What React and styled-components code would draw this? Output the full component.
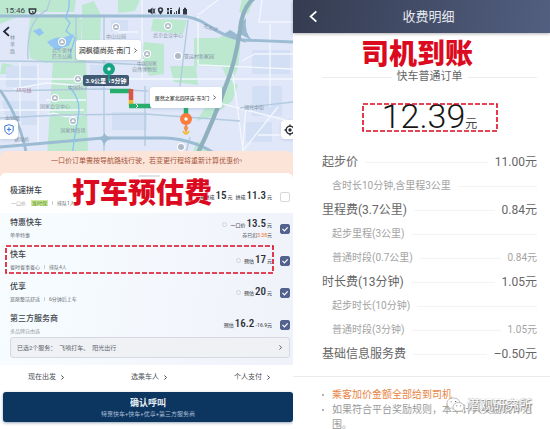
import React from "react";
import styled, { createGlobalStyle, css } from "styled-components";

const GlobalStyle = createGlobalStyle`
  * { box-sizing: border-box; }
  body {
    margin: 0;
    background: #fff;
    font-family: Roboto, "Noto Sans CJK SC", sans-serif;
    color: #333;
  }
  button, input { font: inherit; color: inherit; margin: 0; }
  button { border: 0; padding: 0; background: none; cursor: pointer; }
  h1, h2, h3, p, ul, dl, dd { margin: 0; padding: 0; font-weight: 400; }
`;

const red = "#dc0a20";

const Page = styled.div`
  display: grid;
  grid-template-columns: 293fr 257fr;
  min-height: 100vh;
  overflow: hidden;
`;

const Annotation = styled.strong`
  font: 900 28px/32px "Noto Sans CJK SC", sans-serif;
  color: ${red};
  white-space: nowrap;
`;

const Outline = styled.svg`
  position: absolute;
  inset: 0;
  width: 100%;
  height: 100%;
  overflow: visible;
  pointer-events: none;
`;

function DashedOutline() {
  return (
    <Outline aria-hidden="true">
      <rect width="100%" height="100%" fill="none" stroke={red} strokeWidth="1.6" strokeDasharray="5 2" />
    </Outline>
  );
}

/* ---------- Ride request ---------- */

const RidePanel = styled.main`
  display: flex;
  flex-direction: column;
  min-width: 0;
  background: #fff;
`;

const MapArea = styled.section`
  position: relative;
  height: 157px;
  overflow: hidden;
  background: #dde7f7;
`;

const MapCanvas = styled.svg`
  display: block;
  width: 100%;
  height: 100%;
  font-family: "Noto Sans CJK SC", sans-serif;
`;

const MapItem = styled.div`
  position: absolute;
  left: ${(p) => p.$x}px;
  top: ${(p) => p.$y}px;
`;

const Callout = styled.button`
  display: flex;
  align-items: center;
  justify-content: center;
  gap: 3px;
  width: ${(p) => p.$width}px;
  height: ${(p) => p.$height}px;
  border-radius: 3px;
  background: #fff;
  box-shadow: 0 1px 3px #5b75993d;
  color: #444;
  font-size: ${(p) => p.$size}px;
  font-weight: 500;
  white-space: nowrap;
`;

const TripTag = styled.div`
  width: 46px;
  border-radius: 2px;
  background: #405a73;
  color: #fff;
  font-size: 6px;
  font-weight: 700;
  line-height: 11px;
  text-align: center;
  white-space: nowrap;
`;

const MapTool = styled.button`
  position: absolute;
  top: 120px;
  ${(p) => (p.$side === "left" ? "left: 0; border-radius: 0 4px 4px 0;" : "right: -6px; border-radius: 4px;")}
  display: grid;
  place-items: center;
  width: 18px;
  height: 19px;
  background: #fff;
  box-shadow: 0 1px 3px #5b759933;
`;

const StatusBar = styled.div`
  position: absolute;
  inset: 6px 106px auto 5px;
  display: flex;
  align-items: center;
  gap: 3px;
  font-size: 8px;
  line-height: 10px;
  color: #3a424c;
`;

const StatusIcons = styled.svg`
  margin-left: auto;
`;

const MapBack = styled.button`
  position: absolute;
  left: 1px;
  top: 26px;
  line-height: 0;
`;

const Banner = styled.button`
  position: relative;
  margin-top: -6px;
  padding: 5px 0 13px;
  border-radius: 6px 6px 0 0;
  background: #fde4d9;
  color: #a3553a;
  font-size: 7px;
  line-height: 10px;
  text-align: center;
  white-space: nowrap;
`;

const Sheet = styled.section`
  position: relative;
  margin-top: -6px;
  padding-top: 8px;
  padding-bottom: 7px;
  border-radius: 6px 6px 0 0;
  background: linear-gradient(100deg, #f7fdff 0%, #f4f8fd 50%, #eff2f9 100%);
  &::before {
    content: "";
    position: absolute;
    top: 2px;
    left: 138px;
    width: 22px;
    height: 2px;
    border-radius: 1px;
    background: #e3e3e6;
    z-index: 1;
  }
`;

const SheetTop = styled.div`
  position: relative;
  margin-top: -8px;
  padding-top: 8px;
  border-radius: 6px 6px 0 0;
  background: #fff;
`;

const SheetNote = styled(Annotation)`
  position: absolute;
  left: 72px;
  top: 2px;
`;

const Ride = styled.label`
  position: relative;
  display: grid;
  grid-template-columns: 1fr auto 10px;
  column-gap: 8px;
  align-items: center;
  padding: 5px 3px ${(p) => (p.$last ? 2 : 6)}px 10px;
`;

const RideTitle = styled.h3`
  font-size: 8px;
  font-weight: 500;
  line-height: 10px;
  color: #40444c;
`;

const RideInfo = styled.p`
  display: flex;
  align-items: center;
  gap: 4px;
  margin-top: 3px;
  font-size: 5px;
  line-height: 8px;
  color: ${(p) => (p.$faint ? "#9a9ea5" : "#666b73")};
  white-space: nowrap;
`;

const Tag = styled.span`
  padding: 0 1px;
  line-height: 6px;
  ${(p) =>
    p.$green
      ? css`
          background: #cdeb9c;
          color: #5d8a2a;
        `
      : css`
          color: #a9a0a0;
        `}
`;

const Divider = styled.i`
  width: 1px;
  height: 4px;
  background: #c9ccd2;
`;

const Fare = styled.div`
  text-align: right;
  font-size: 5px;
  line-height: 8px;
  color: #555a62;
  white-space: nowrap;
`;

const FareLine = styled.div`
  display: flex;
  align-items: baseline;
  justify-content: flex-end;
  gap: 1px;
  line-height: 12px;
  font-weight: 500;
`;

const Amount = styled.b`
  font-family: "Roboto Condensed", Roboto, sans-serif;
  font-size: 11px;
  font-weight: 500;
  color: #2b2e34;
`;

const Spacer = styled.span`
  width: 1px;
`;

const Discount = styled.span`
  color: #f0702a;
`;

const Info = styled.span`
  width: 5px;
  height: 5px;
  margin-right: 2px;
  border: 1px solid #d0d3d9;
  border-radius: 50%;
`;

const Check = styled.input`
  appearance: none;
  width: 10px;
  height: 10px;
  border: 1px solid #d5d7dc;
  border-radius: 2px;
  background: #fff;
  &:checked {
    border-color: #54628f;
    background: #54628f
      url("data:image/svg+xml,%3Csvg xmlns='http://www.w3.org/2000/svg' viewBox='0 0 8 8'%3E%3Cpath d='M1.5 3.8 3.4 5.8 6.7 2.3' fill='none' stroke='white' stroke-width='1.2'/%3E%3C/svg%3E")
      center / 8px 8px no-repeat;
  }
`;

const Highlight = styled.div`
  position: absolute;
  inset: 1px 20px 4px 6px;
`;

const Services = styled.button`
  display: flex;
  align-items: center;
  justify-content: space-between;
  width: calc(100% - 13px);
  height: 21px;
  margin: 0 3px 0 10px;
  padding: 0 6px;
  border: 1px solid #d6d9e0;
  border-radius: 3px;
  background: #eff1f5;
  color: #60646c;
  font-size: 6px;
`;

const Options = styled.nav`
  display: flex;
  justify-content: space-between;
  padding: 7px 22px 10px 28px;
  background: #fff;
`;

const Option = styled.button`
  display: flex;
  align-items: center;
  gap: 4px;
  font-size: 7px;
  line-height: 10px;
  color: #4b4f57;
`;

const Confirm = styled.button`
  margin-left: 3px;
  padding: 5px 0 4px;
  border-radius: 3px;
  background: #0c3560;
  box-shadow: 0 1px 3px #0c356070;
  color: #e8eef5;
  font-size: 9px;
  font-weight: 700;
  line-height: 12px;
  text-align: center;
`;

const ConfirmDetail = styled.span`
  display: block;
  font-size: 6px;
  font-weight: 400;
  line-height: 9px;
  color: #a9bdd3;
`;

function Chevron({ size = 5, left = false, color = "currentColor", weight = 1 }) {
  return (
    <svg width={size} height={size} viewBox="0 0 5 5" fill="none" stroke={color} strokeWidth={weight} aria-hidden="true">
      <path d={left ? "M3.6.5 1.4 2.5l2.2 2" : "M1.4.5l2.2 2-2.2 2"} />
    </svg>
  );
}

function Pin({ color }) {
  return (
    <svg width="14" height="20" viewBox="0 0 14 20" aria-hidden="true">
      <path d="M7 12v7" stroke={color} strokeWidth="1.6" />
      <circle cx="7" cy="7" r="6" fill={color} />
      <circle cx="7" cy="7" r="1.7" fill="#fff" />
    </svg>
  );
}

const places = [
  [62, 42, 52, "北京奥林", "匹克公园"],
  [116, 27, 38, "中山公园"],
  [168, 26, 37, "北京会议中心"],
  [78, 79, 89, "中国科学"],
  [55, 98, 108, "国家会议中心"],
  [73, 121, 132, "国家体育场"],
  [147, 54, 65, "中国国家"],
];

function CityMap() {
  return (
    <MapCanvas viewBox="0 0 293 157" preserveAspectRatio="xMidYMin slice" aria-hidden="true">
      <rect width="293" height="157" fill="#dfe7f8" />
      <g fill="#bce8d0">
        <path d="M0 0h76l-2 12H30L0 24z" />
        <path d="M31 14h44l7 6-2 42-35 1-15-5-2-25z" />
        <path d="M53 60h33l2 97H47z" />
        <path d="M82 5l12-4 7 14-1 25H82zM118 0h22l-5 11-17 2z" />
        <path d="M153 19l34 1-4 14-32-3zM144 42l20 2v30l-15 2-7-15z" />
        <path d="M194 38h25l12-8 10 8-3 30-8 17-8-18-28-1z" />
        <path d="M170 66h26l2 19-24-3zM2 63l11 2-3 9H0z" />
        <path d="M228 80l10 5-6 16-21 16-15 4 12-17zM197 141l25 16h-31z" />
        <path d="M242 0h12l-6 14-9-2z" />
      </g>
      <g fill="#d3dff4">
        <path d="M2 101h35v24H8zM90 65h13v24H90zM112 112h35v18h-35zM252 50h38v24h-38zM252 86h30v30h-30z" />
        <path d="M6 66h33v21H6zM111 20h17v11h-17zM246 122h26v20h-26z" />
      </g>
      <g fill="none" stroke="#f3f7fe" strokeWidth="1.3">
        <path d="M0 79h293M14 89l32-6 42 3M46 100h40M0 110h84M198 16v49M198 65l95 4M198 15l20-15M262 0l-3 22h34M242 61l13-7h38M232 68l12 89M270 24v83M211 101l82 21M246 107l-4 50M258 135h35M142 0v80M118 32h20M90 56l54 4M20 63v84M38 64v80" />
        <path d="M46 116q6-5 14-1t26-1M238 157l40-50" />
      </g>
      <g fill="none" stroke="#b3cbe0" strokeWidth="1.4">
        <path d="M28 59Q26 20 47 10l3-10M76 16v44M0 61l88 1 58 3M0 91l103-2 45 2M0 118l60-3 85-1 95 7M104 15v142M188 20l-8 66M145 86v60M240 108l53-6M190 137l-5 20" />
      </g>
      <g fill="none" stroke="#9cbcd4" strokeWidth="2.8">
        <path d="M0 16h103l75 0q17 0 31 10t33 14l51 2M0 90q20 28 27 67M0 147l103-9h62q30 1 55 19" />
      </g>
      <path d="M230 30q11 6 16 13-15-6-22-9zM238 33q4-12 8-15-2 16 7 23zM94 138q12 0 10-8 0 8 12 8-12 1-12 9 0-9-10-9z" fill="#98b9cf" />
      <path d="M254-2q-12 10-14 32-5 34-14 55-12 35-30 72" fill="none" stroke="#8fb0bf" strokeWidth="4.2" />
      <path d="M69 0q1 10-4 17l5 6-4 8 9 7-6 20M68 86q14 12 10 32t-6 39" fill="none" stroke="#8cc3f2" strokeWidth="1.3" />
      <path d="M47 42q9-6 15-4l12-4-5 12q-9 1-11 5l-7-5zM33 31l7-3 4 5-5 3z" fill="#92c5f4" />
      <g>
        {places.map(([x, iconY, textY, ...lines]) => (
          <g key={lines[0]}>
            <circle cx={x} cy={iconY} r="4" fill="#fff" />
            <circle cx={x} cy={iconY} r="3" fill="#b0bac6" />
            <path d={`M${x - 2} ${iconY + 1}l2-3 2 3z`} fill="#fff" />
            {lines.map((line, i) => (
              <text key={line} x={x} y={textY + i * 6} fontSize="5" fill="#8b9aa9" textAnchor="middle">{line}</text>
            ))}
          </g>
        ))}
        <circle cx="178" cy="56" r="4" fill="#fff" />
        <circle cx="178" cy="56" r="3" fill="#b0bac6" />
        <circle cx="181" cy="147" r="4" fill="#fff" />
        <circle cx="181" cy="147" r="3" fill="#b0bac6" />
      </g>
      <g fontSize="5" fill="#8293a5">
        <text x="184" y="58">亚运村新家园</text>
        <text x="132" y="71">自然博物馆</text>
        <text x="203" y="27" transform="rotate(20 203 27)">北五环</text>
        <text x="244" y="109">湖光中街</text>
        <text x="16" y="92" fill="#b07c9b">15号线</text>
        <text x="5" y="120">中轴路</text>
        <text x="14" y="141">健翔桥</text>
        <text x="10" y="39">林</text>
        <text x="10" y="46">萃</text>
        <text x="10" y="53">路</text>
      </g>
      <g fill="none" strokeWidth="4.5">
        <path d="M110 91h21" stroke="#27ae6b" />
        <path d="M131 89v11" stroke="#e05248" />
        <path d="M131 100v6" stroke="#efb62c" />
        <path d="M129 106h22M186 107v10" stroke="#27ae6b" />
      </g>
      <path d="M136 104l2 2-2 2" fill="none" stroke="#fff" strokeWidth="1" />
      <circle cx="186" cy="128" r="1.8" fill="#fff" stroke="#e88b39" />
      <path d="M183 131q1 3 3 3t3-3" fill="none" stroke="#efb83c" strokeWidth="1.4" />
      <circle cx="186" cy="132" r="1.7" fill="#f3c04b" />
    </MapCanvas>
  );
}

function FareAmount({ label, value, info }) {
  return (
    <>
      {info && <Info />}
      <span>{label}</span>
      <Amount>{value}</Amount>
      <span>元</span>
    </>
  );
}

function RideRow({ title, info, fare, note, checked, last, faint, children }) {
  return (
    <Ride $last={last}>
      <div>
        <RideTitle>{title}</RideTitle>
        <RideInfo $faint={faint}>{info}</RideInfo>
      </div>
      <Fare>
        <FareLine>{fare}</FareLine>
        {note}
      </Fare>
      <Check type="checkbox" defaultChecked={checked} />
      {children}
    </Ride>
  );
}

function RideRequest() {
  return (
    <RidePanel>
      <MapArea>
        <CityMap />
        <StatusBar>
          <span>15:46</span>
          <svg width="9" height="7" viewBox="0 0 9 7" fill="none" stroke="#303840" strokeWidth="1.4" aria-hidden="true">
            <path d="M.5 1h7.2v1.7a3.2 3.2 0 0 1-6.4 0V1M4 4h1.5" />
          </svg>
          <StatusIcons width="39" height="8" viewBox="0 0 39 8" fill="#303840" aria-hidden="true">
            <path d="M0 2.5h2L4.5.5v7L2 5.5H0z" />
            <path d="M5 1.5l2 5M7 1.5l-2 5" stroke="#303840" />
            <path fillRule="evenodd" d="M12.5.2a2.7 2.7 0 0 1 2.7 2.7c0 2-2.7 4.6-2.7 4.6S9.8 4.9 9.8 2.9A2.7 2.7 0 0 1 12.5.2zm0 1.600a1.100 1.100 0 1 0 0 2.200 1.100 1.100 0 0 0 0-2.200z" />
            <path d="M19 1h2v2.500h-2zM22 1h2v1h-2zM19 4.500h2V7h-2zM22 3h2v4h-2zM26 5.500h1V7h-1zM28 4h1v3h-1zM30 2.500h1V7h-1zM32-.1V7h-1.200V1zM35 2h1V.8h2V2h1v5.500h-4z" />
          </StatusIcons>
        </StatusBar>
        <MapBack aria-label="返回"><Chevron left size={11} color="#20262e" weight={0.8} /></MapBack>
        <MapItem $x={83} $y={75}><TripTag>3.9公里 15分钟</TripTag></MapItem>
        <MapItem $x={102} $y={62}><Pin color="#16a583" /></MapItem>
        <MapItem $x={179} $y={112}><Pin color="#fa7d3e" /></MapItem>
        <MapItem $x={76} $y={40}>
          <Callout $width={65} $height={20} $size={7}>润枫德尚苑-南门 <Chevron weight={0.8} /></Callout>
        </MapItem>
        <MapItem $x={150} $y={87}>
          <Callout $width={72} $height={21} $size={5}>居然之家北四环店-东3门 <Chevron weight={0.8} /></Callout>
        </MapItem>
        <MapTool $side="left" aria-label="安全中心">
          <svg width="10" height="11" viewBox="0 0 10 11" fill="none" stroke="#3674d8" aria-hidden="true">
            <path d="M5 .7l4.200 1.300v3.800c0 2.200-1.800 3.600-4.200 4.600C2.600 9.400.8 8 .8 5.800V2zM5 3.200v4.400M2.800 5.400h4.400" />
          </svg>
        </MapTool>
        <MapTool $side="right" aria-label="定位">
          <svg width="12" height="12" viewBox="0 0 12 12" fill="none" stroke="#262b31" strokeWidth="1.3" aria-hidden="true">
            <circle cx="6" cy="6" r="3.9" />
            <path d="M6 .5v2M6 9.500v2M.5 6h2M9.500 6h2" />
            <circle cx="6" cy="6" r="1" fill="#262b31" />
          </svg>
        </MapTool>
      </MapArea>
      <Banner>一口价订单需按导航路线行驶，若变更行程将重新计算优惠价›</Banner>
      <Sheet>
        <SheetTop>
          <RideRow
            title="极速拼车"
            info={<><Tag>一口价</Tag><Tag $green>准时保</Tag><Divider />排队1人</>}
            fare={<><FareAmount label="未拼成" value="15" /><Spacer /><FareAmount label="拼成" value="11.3" /></>}
          />
          <SheetNote>打车预估费</SheetNote>
        </SheetTop>
        <RideRow
          title="特惠快车"
          info="单单特惠"
          fare={<FareAmount info label="一口价" value="13.5" />}
          note={<>券已扣<Discount>3.38</Discount>元</>}
          checked
        />
        <RideRow
          title="快车"
          info={<>省时省事省心<Divider />排队4人</>}
          fare={<FareAmount info label="预估" value="17" />}
          checked
        >
          <Highlight><DashedOutline /></Highlight>
        </RideRow>
        <RideRow
          title="优享"
          info={<>宽敞整洁舒适<Divider />6分钟后上车</>}
          fare={<FareAmount info label="预估" value="20" />}
          checked
        />
        <RideRow
          title="第三方服务商"
          info="多品牌自由选"
          fare={<><span>预估</span><Amount>16.2</Amount><span>-16.9元</span></>}
          checked
          last
          faint
        />
        <Services>
          <span>已选2个服务：&nbsp; 飞嘀打车、&nbsp; 阳光出行</span>
          <Chevron />
        </Services>
      </Sheet>
      <Options>
        <Option>现在出发 <Chevron /></Option>
        <Option>选乘车人 <Chevron /></Option>
        <Option>个人支付 <Chevron /></Option>
      </Options>
      <Confirm>
        确认呼叫
        <ConfirmDetail>特惠快车+快车+优享+第三方服务商</ConfirmDetail>
      </Confirm>
    </RidePanel>
  );
}

/* ---------- Fare details ---------- */

const FarePanel = styled.aside`
  position: relative;
  min-width: 0;
  background: #fff;
`;

const FareHeader = styled.header`
  display: grid;
  grid-template-columns: 13px 1fr;
  align-items: center;
  height: 33px;
  padding: 0 13px 0 14px;
  background: linear-gradient(100deg, #353c51, #525f80);
  box-shadow: 0 1px 3px #0000004d;
  color: #e6e9ef;
`;

const BackButton = styled.button`
  line-height: 0;
`;

const HeaderTitle = styled.h1`
  font-size: 13px;
  line-height: 20px;
  text-align: center;
`;

const Summary = styled.section`
  display: flex;
  flex-direction: column;
  align-items: center;
  padding: 3px 13px 19px 29px;
`;

const PayoutNote = styled(Annotation)`
  align-self: flex-start;
  margin-left: 39px;
`;

const OrderType = styled.h2`
  display: flex;
  align-items: center;
  align-self: stretch;
  gap: 5px;
  margin-top: 2px;
  font-size: 11px;
  line-height: 14px;
  color: #666;
  &::before, &::after {
    content: "";
    flex: 1;
    height: 1px;
    background: #ececec;
  }
`;

const Total = styled.div`
  position: relative;
  display: flex;
  align-items: baseline;
  justify-content: center;
  width: 134px;
  height: 27px;
  margin-top: 20px;
  font-size: 12px;
  line-height: 25px;
  color: #444;
`;

const TotalValue = styled.span`
  font-size: 34px;
  font-weight: 300;
  color: #161616;
`;

const Items = styled.dl`
  padding: 0 13px 10px 29px;
`;

const Item = styled.div`
  display: flex;
  align-items: center;
  gap: 7px;
  padding-left: ${(p) => (p.$sub ? 10 : 0)}px;
  font-size: ${(p) => (p.$sub ? 10 : 12)}px;
  line-height: 24px;
  color: ${(p) => (p.$sub ? "#a3a3a3" : "#666")};
  white-space: nowrap;
  &::before {
    content: "";
    order: 1;
    flex: 1;
    height: 1px;
    background: #f3f3f3;
  }
  dd { order: 2; }
`;

const Notes = styled.ul`
  padding: 10px 12px 0 39px;
  border-top: 1px solid #ebebeb;
  font-size: 10px;
  line-height: 15px;
  color: #999;
  list-style: none;
`;

const Note = styled.li`
  position: relative;
  color: ${(p) => (p.$accent ? "#e8833f" : "inherit")};
  &::before {
    content: "";
    position: absolute;
    left: -10px;
    top: 7px;
    width: 2px;
    height: 2px;
    border-radius: 50%;
    background: #999;
  }
`;

const Watermark = styled.div`
  position: absolute;
  right: 18px;
  top: 396px;
  display: flex;
  align-items: center;
  gap: 2px;
  font-size: 13px;
  line-height: 18px;
  color: #fff;
  text-shadow: 0 0 1px #777, 1px 1px 1px #888;
`;

const fareItems = [
  ["起步价", "11.00元"],
  ["含时长10分钟,含里程3公里", "", true],
  ["里程费(3.7公里)", "0.84元"],
  ["起步里程(3公里)", "", true],
  ["普通时段(0.7公里)", "0.84元", true],
  ["时长费(13分钟)", "1.05元"],
  ["起步时长(10分钟)", "", true],
  ["普通时段(3分钟)", "1.05元", true],
  ["基础信息服务费", "–0.50元"],
];

function FareDetails() {
  return (
    <FarePanel>
      <FareHeader>
        <BackButton aria-label="返回"><Chevron left size={13} color="#fff" weight={0.7} /></BackButton>
        <HeaderTitle>收费明细</HeaderTitle>
      </FareHeader>
      <Summary>
        <PayoutNote>司机到账</PayoutNote>
        <OrderType>快车普通订单</OrderType>
        <Total>
          <TotalValue>12.39</TotalValue>元
          <DashedOutline />
        </Total>
      </Summary>
      <Items>
        {fareItems.map(([label, value, sub]) => (
          <Item key={label} $sub={sub}>
            <dt>{label}</dt>
            {value && <dd>{value}</dd>}
          </Item>
        ))}
      </Items>
      <Notes>
        <Note $accent>乘客加价金额全部给到司机</Note>
        <Note>如果符合平台奖励规则，本单计入奖励统计范围。</Note>
      </Notes>
      <Watermark>
        <svg width="19" height="16" viewBox="0 0 19 16" fill="#fff" stroke="#aaa" strokeWidth=".8" aria-hidden="true">
          <path d="M7.500 1C3.700 1 1 3.300 1 6.200c0 1.700.9 3 2.300 4L2.700 12.300 5.200 11q1.200.4 2.300.3C11 11.300 14 9 14 6.200S11 1 7.500 1z" />
          <path d="M12.500 5.500C9.400 5.500 7 7.400 7 9.900s2.400 4.400 5.500 4.400q1 0 2-.4l2 1.100-.5-1.800c1.300-.8 2-2 2-3.300 0-2.500-2.500-4.400-5.500-4.400z" />
          <path d="M5.300 4.500v.8M9.600 4.100v.8M10.700 8.500v.8M14.500 8.500v.8" stroke="#666" strokeWidth="1.2" />
        </svg>
        <span>潜观研究所</span>
      </Watermark>
    </FarePanel>
  );
}

export default function App() {
  return (
    <>
      <GlobalStyle />
      <Page>
        <RideRequest />
        <FareDetails />
      </Page>
    </>
  );
}
